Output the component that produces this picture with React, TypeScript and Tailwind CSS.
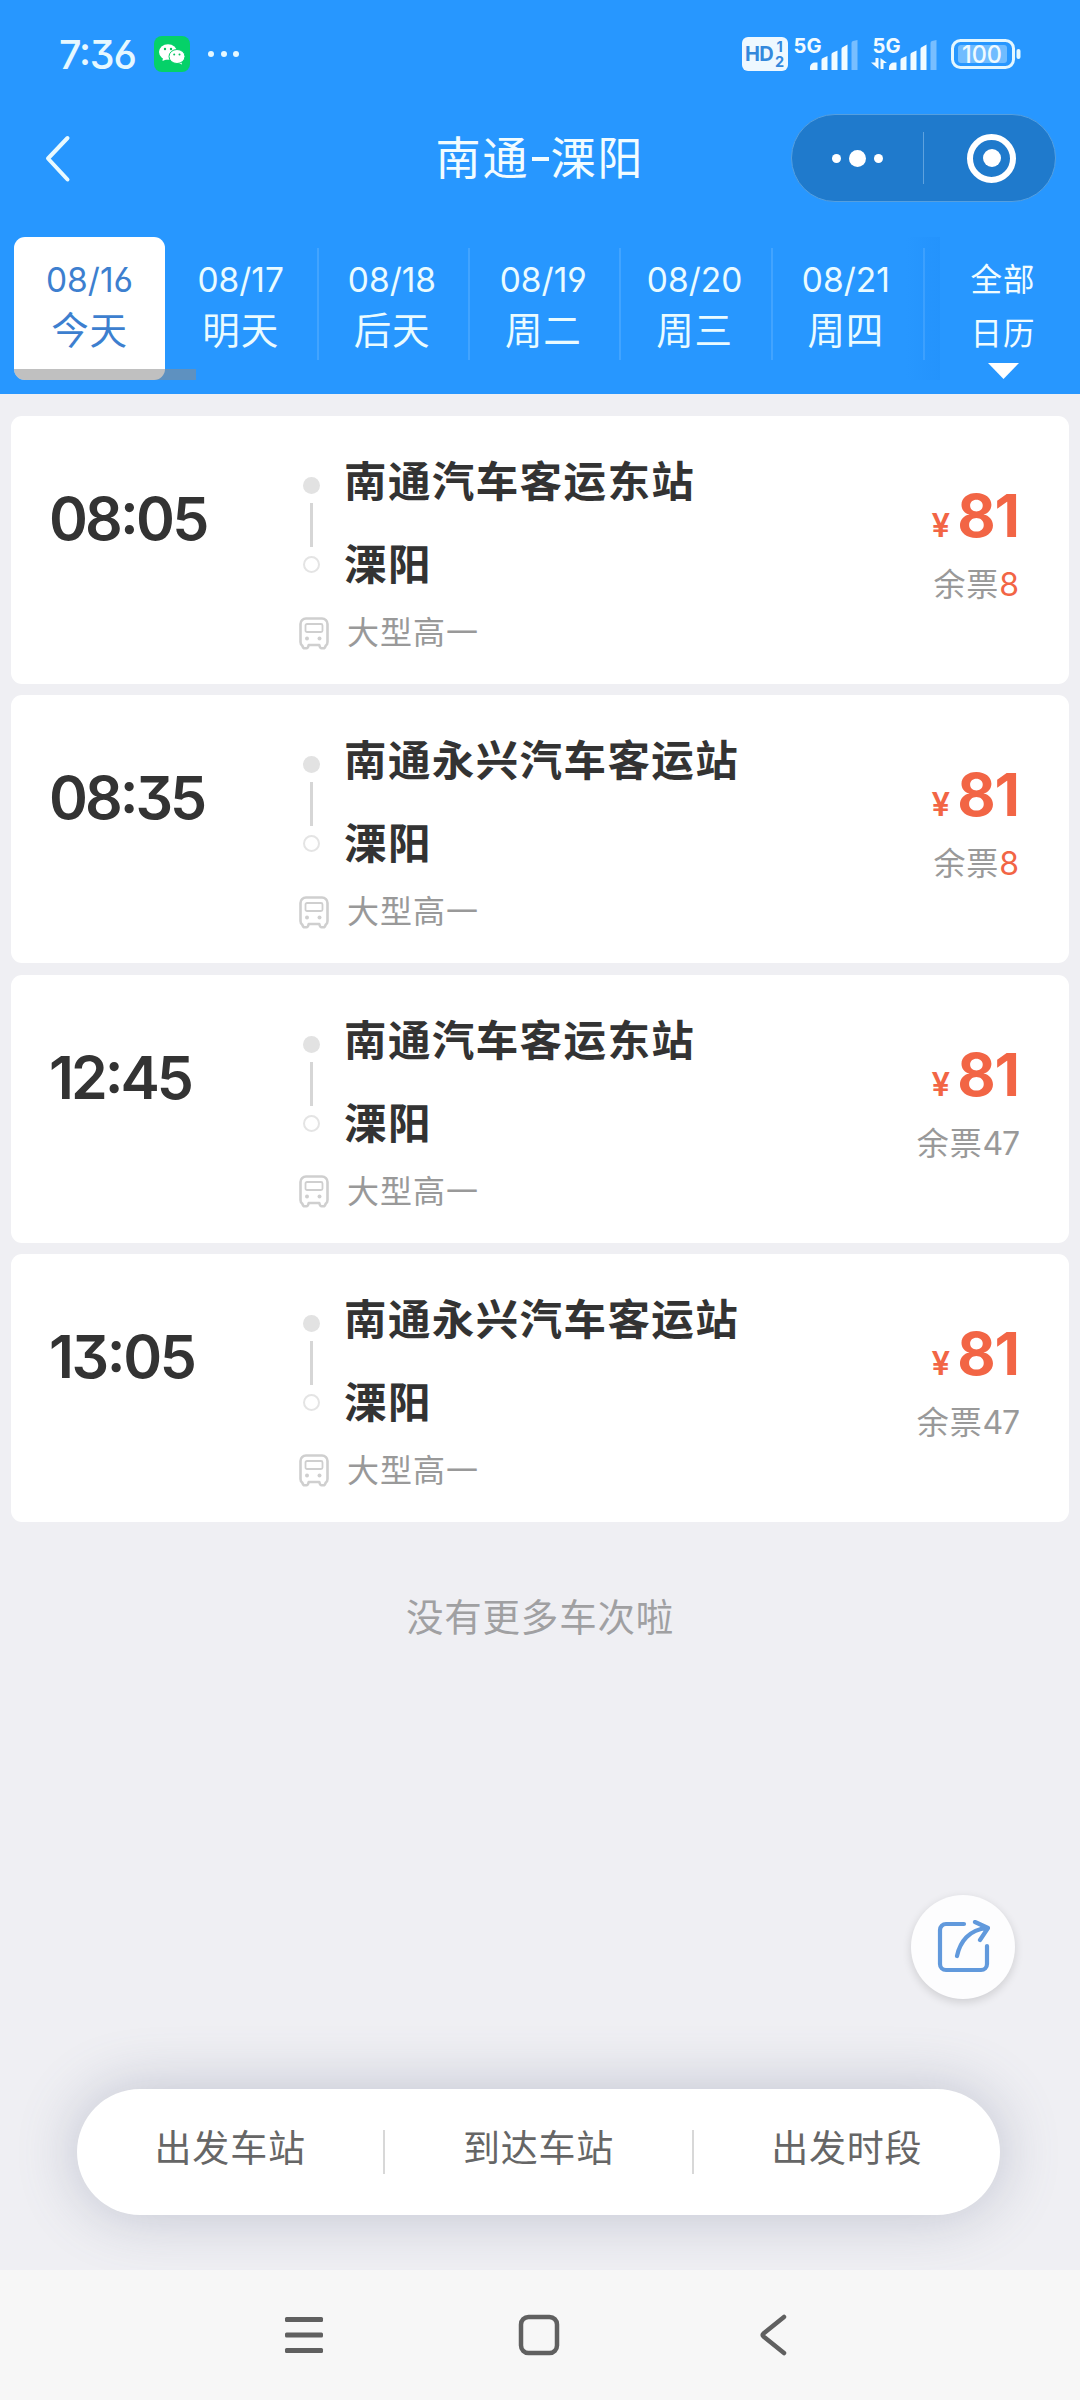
import React from "react";

type Trip = { time: string; from: string; to: string; left: number; spacing: string };

const trips: Trip[] = [
  { time: "08:05", from: "南通汽车客运东站", to: "溧阳", left: 8, spacing: "tracking-[-2.8px]" },
  { time: "08:35", from: "南通永兴汽车客运站", to: "溧阳", left: 8, spacing: "tracking-[-3px]" },
  { time: "12:45", from: "南通汽车客运东站", to: "溧阳", left: 47, spacing: "tracking-[-3px]" },
  { time: "13:05", from: "南通永兴汽车客运站", to: "溧阳", left: 47, spacing: "tracking-[-2.4px]" },
];

const days = [
  { date: "08/16", name: "今天" },
  { date: "08/17", name: "明天" },
  { date: "08/18", name: "后天" },
  { date: "08/19", name: "周二" },
  { date: "08/20", name: "周三" },
  { date: "08/21", name: "周四" },
];

function Signal({ data }: { data?: boolean }) {
  return (
    <svg width="70" height="44" viewBox="-1 -8 70 44" fill="#f2fbff">
      <text x="0.500" y="16.500" fontSize="20" fontWeight="700" fontFamily="Inter, sans-serif" textLength="28" lengthAdjust="spacingAndGlyphs">
        5G
      </text>
      <path d="M17 34v-2.500a5 5 0 0 1 5-5h2.500V34z" />
      <path d="M28.500 34V24q0-1.500 1.500-2l4.500-2v14z" />
      <path d="M38.500 34V18.500q0-1.500 1.500-2l4.500-2V34z" />
      <path d="M48.500 34V13q0-1.500 1.500-2l4.500-2.500V34z" />
      <path d="M58.500 34V7q0-1.500 1.500-2l4.500-1v30z" opacity="0.4" />
      {data && <path d="M3.500 22h3v11L-1 26.500h4.500zM8.500 33V22l6.500 5h-3.500v6z" />}
    </svg>
  );
}

function StatusBar() {
  return (
    <div className="flex h-[108px] items-center justify-between pl-[59px] pr-[59px]">
      <div className="flex items-center">
        <span className="w-[95px] pt-px text-[39.500px] leading-[44px] font-medium tracking-[-1.2px] text-[#e6f8ff] [font-feature-settings:'cv03','cv04','cv09','case']">7:36</span>
        <svg width="36" height="36" viewBox="0 0 36 36">
          <rect width="36" height="36" rx="8" fill="#05d168" />
          <ellipse cx="14" cy="16" rx="9" ry="7.800" fill="#fff" />
          <path d="M9 21l-.5 4 5-2zM27 25l1 3.500-5-2z" fill="#fff" />
          <ellipse cx="23" cy="20.500" rx="8" ry="7" fill="#fff" stroke="#05d168" strokeWidth="1" />
          <g fill="#05c160">
            <circle cx="11" cy="13" r="1.200" />
            <circle cx="17" cy="13" r="1.200" />
            <circle cx="20.200" cy="18.600" r="1" />
            <circle cx="25.500" cy="18.600" r="1" />
          </g>
        </svg>
        <div className="ml-[18px] flex gap-[6.500px]">
          <i className="size-1.5 rounded-full bg-[#e6f8ff]" />
          <i className="size-1.5 rounded-full bg-[#e6f8ff]" />
          <i className="size-1.5 rounded-full bg-[#e6f8ff]" />
        </div>
      </div>
      <div className="flex items-center">
        <div className="flex h-[34px] w-[46px] items-center rounded-md bg-[#eef8ff] pl-[3px] font-bold text-[#3488dc]">
          <span className="w-[30px] text-[20px] leading-[34px] tracking-[-0.8px]">HD</span>
          <span className="flex flex-col text-center text-[14.500px] leading-[15px]">
            <span>1</span>
            <span>2</span>
          </span>
        </div>
        <div className="ml-1 w-[79px] pb-2"><Signal /></div>
        <div className="w-[80px] pb-2"><Signal data /></div>
        <svg width="70" height="32" viewBox="0 0 70 32">
          <rect x="1.500" y="2.500" width="61" height="27" rx="8" fill="none" stroke="#e4f7ff" strokeWidth="3" />
          <rect x="7" y="7" width="49" height="18" rx="3" fill="#70bcff" />
          <rect x="65.500" y="11" width="4" height="10" rx="2" fill="#e4f7ff" />
          <text x="11" y="24.500" fontSize="24" fontWeight="500" fontFamily="Inter, sans-serif" fill="#eefaff" textLength="40" lengthAdjust="spacingAndGlyphs">100</text>
        </svg>
      </div>
    </div>
  );
}

function TitleBar() {
  return (
    <div className="grid h-[100px] grid-cols-[1fr_auto_1fr] items-center">
      <svg className="ml-[43px]" width="28" height="50" viewBox="0 0 28 50" fill="none" stroke="#e9faff" strokeWidth="4" strokeLinecap="round" strokeLinejoin="round">
        <path d="M24.500 5L5 25.500L24.500 46.500" />
      </svg>
      <h1 className="flex items-center pt-[2px] text-[45px] leading-[60px] font-normal tracking-[2px] text-[#f2fcff]">
        <span>南通</span>
        <span className="mx-[2px] h-[3.500px] w-[17px] bg-[#f2fcff]" />
        <span>溧阳</span>
      </h1>
      <div className="mr-[24px] flex h-[88px] w-[265px] items-center justify-self-end rounded-full border border-[#559fdf] bg-[#1f7acc]">
        <div className="flex w-[131px] items-center justify-center gap-2">
          <i className="size-[9px] rounded-full bg-white" />
          <i className="size-[17px] rounded-full bg-white" />
          <i className="size-[9px] rounded-full bg-white" />
        </div>
        <i className="h-[52px] w-px bg-[#5ea2de]" />
        <div className="flex flex-1 justify-center pl-[4px]">
          <div className="flex size-[49px] items-center justify-center rounded-full border-[6px] border-white">
            <i className="size-[18px] rounded-full bg-white" />
          </div>
        </div>
      </div>
    </div>
  );
}

function DateTabs() {
  return (
    <div className="mt-[29px] flex h-[157px] pl-[14px]">
      <div className="relative flex h-[143px] w-[926px] overflow-hidden">
        {days.map((d, i) => (
          <div
            key={d.date}
            className={
              i === 0
                ? "flex w-[151px] shrink-0 flex-col items-center rounded-[11px] bg-white pt-[21px] text-[#3d7fcf]"
                : "flex w-[151.300px] shrink-0 flex-col items-center pt-[21px] text-[#eafbff]"
            }
          >
            <span className="text-[33.500px] leading-[44px]">{d.date}</span>
            <span className="mt-[3px] text-[37.500px] leading-[52px] tracking-[0.8px]">{d.name}</span>
          </div>
        ))}
        {[302.5, 454, 605, 757, 908.5].map((x) => (
          <i key={x} className="absolute top-[11px] h-[112px] w-[2px] bg-[#42a4ff]" style={{ left: x }} />
        ))}
        <i className="absolute top-0 right-0 h-full w-[34px] bg-linear-to-r from-transparent to-[#1b88f5]/25" />
        <i className="absolute bottom-0 left-0 h-[11px] w-[182px] rounded-bl-[11px] bg-[#8c8c8c]/55" />
      </div>
      <div className="flex flex-1 flex-col items-center pr-[14px] pt-[16px] text-[31.500px] leading-[54px] tracking-[1px] text-[#f0fcff]">
        <span>全部</span>
        <span>日历</span>
        <svg className="mt-[2px]" width="31" height="16" viewBox="0 0 31 16">
          <path d="M0 0h31L15.500 16z" fill="#fff" />
        </svg>
      </div>
    </div>
  );
}

function BusIcon() {
  return (
    <svg width="30" height="33" viewBox="0 0 30 33" fill="none" stroke="#cfcfcf" strokeWidth="2.600">
      <path d="M7 1.500h16a5.500 5.500 0 0 1 5.500 5.500v18c0 2-.5 2.800-1.700 3.500-.6 1.800-1.300 2.800-2.300 2.800h-2c-1.200 0-1.600-.8-2.200-3.300H9.700c-.6 2.500-1 3.300-2.200 3.300h-2c-1 0-1.700-1-2.300-2.800C2 27.800 1.500 27 1.500 25V7A5.500 5.500 0 0 1 7 1.500z" strokeLinejoin="round" />
      <rect x="6.500" y="7" width="17" height="8" rx="1.500" strokeWidth="1.800" />
      <circle cx="8" cy="21.500" r="2" fill="#cfcfcf" stroke="none" />
      <circle cx="20.500" cy="21.500" r="2" fill="#cfcfcf" stroke="none" />
    </svg>
  );
}

function TripCard({ trip }: { trip: Trip }) {
  return (
    <li className="flex h-[268px] rounded-[11px] bg-white">
      <div className={`w-[288px] pt-[68px] pl-[38px] text-[59px] leading-[70px] font-semibold text-[#333] [font-feature-settings:'cv03','cv04','cv09','case'] ${trip.spacing}`}>{trip.time}</div>
      <div className="flex flex-1 flex-col pt-[36px]">
        <div className="flex">
          <div className="flex w-[25px] flex-col items-center pt-[25px]">
            <i className="size-[17px] rounded-full bg-[#e2e2e2]" />
            <i className="mt-[9px] h-[44px] w-[3px] bg-[#d6d6d6]" />
            <i className="mt-[9px] size-[17px] rounded-full border-2 border-[#e4e4e4]" />
          </div>
          <div className="ml-[20px] text-[42.500px] leading-[60px] font-bold tracking-[1.4px] text-[#333]">
            <p>{trip.from}</p>
            <p className="mt-[23px]">{trip.to}</p>
          </div>
        </div>
        <div className="mt-[18px] flex h-10 items-center">
          <BusIcon />
          <span className="ml-[18px] text-[32px] leading-[40px] tracking-[1px] text-[#999]">大型高一</span>
        </div>
      </div>
      <div className="flex flex-col items-end pt-[65px] pr-[50px]">
        <div className="flex items-baseline text-[#f26545]">
          <span className="text-[33px] leading-[70px] font-semibold">¥</span>
          <span className="ml-[7px] text-[59px] leading-[70px] font-bold tracking-[-1px]">81</span>
        </div>
        <div className="mt-[3px] text-[32px] leading-[44px] tracking-[0.9px] text-[#999]">
          余票<span className={trip.left < 10 ? "tracking-normal text-[#f26545]" : "tracking-[-1.2px]"}>{trip.left}</span>
        </div>
      </div>
    </li>
  );
}

export default function App() {
  return (
    <div
      className="flex h-[2400px] w-[1080px] flex-col overflow-hidden bg-[#efeff3] font-[Inter,'Noto_Sans_CJK_SC',sans-serif] [font-feature-settings:'cv03','cv04','cv09']"
    >
      <header className="h-[394px] shrink-0 bg-[#2797ff]">
        <StatusBar />
        <TitleBar />
        <DateTabs />
      </header>
      <main className="flex flex-1 flex-col">
        <ul className="mx-[11px] mt-[22px] flex flex-col gap-[11.300px]">
          {trips.map((t) => (
            <TripCard key={t.time} trip={t} />
          ))}
        </ul>
        <p className="mt-[68px] text-center text-[37.500px] leading-[56px] tracking-[0.8px] text-[#a0a0a2]">没有更多车次啦</p>
        <button className="mt-[249px] mr-[65px] flex size-[104px] items-center justify-center self-end rounded-full bg-[#fdfdfe] shadow-[0_3px_10px_rgba(0,0,0,0.14)]">
          <svg width="54" height="54" viewBox="0 0 54 54" fill="none" stroke="#6199dc" strokeWidth="4.200" strokeLinecap="round" strokeLinejoin="round">
            <path d="M28 4H10a6 6 0 0 0-6 6v34a6 6 0 0 0 6 6h35a6 6 0 0 0 6-6V26" />
            <path d="M21 36C24 22 33 9.500 51 8M39 2L52 8L44 20" />
          </svg>
        </button>
        <nav className="mt-[90px] ml-[77px] flex h-[126px] w-[923px] items-center rounded-full bg-white text-[37px] leading-[56px] tracking-[0.8px] text-[#666] shadow-[0_0_60px_rgba(90,100,135,0.32)]">
          <span className="flex-1 pb-[5px] text-center">出发车站</span>
          <i className="h-[44px] w-[2px] bg-[#d8d8d8]" />
          <span className="flex-1 pb-[5px] text-center">到达车站</span>
          <i className="h-[44px] w-[2px] bg-[#d8d8d8]" />
          <span className="flex-1 pb-[5px] text-center">出发时段</span>
        </nav>
      </main>
      <footer className="relative flex h-[130px] shrink-0 items-center justify-center gap-[191px] bg-[#f7f7f7] pr-[3px]">
        <svg width="44" height="44" viewBox="0 0 44 44" fill="#606060">
          <rect x="3" y="4" width="38" height="5" rx="1.500" />
          <rect x="3" y="19.500" width="38" height="5" rx="1.500" />
          <rect x="3" y="35" width="38" height="5" rx="1.500" />
        </svg>
        <svg width="44" height="44" viewBox="0 0 44 44" fill="none" stroke="#606060" strokeWidth="4.500">
          <rect x="4" y="4" width="36" height="36" rx="7.500" />
        </svg>
        <svg width="44" height="44" viewBox="0 0 44 44" fill="none" stroke="#606060" strokeWidth="4.500" strokeLinecap="round" strokeLinejoin="round">
          <path d="M32 4L11.500 20.500Q10 22 11.500 23.500L32 40" />
        </svg>
      </footer>
    </div>
  );
}
